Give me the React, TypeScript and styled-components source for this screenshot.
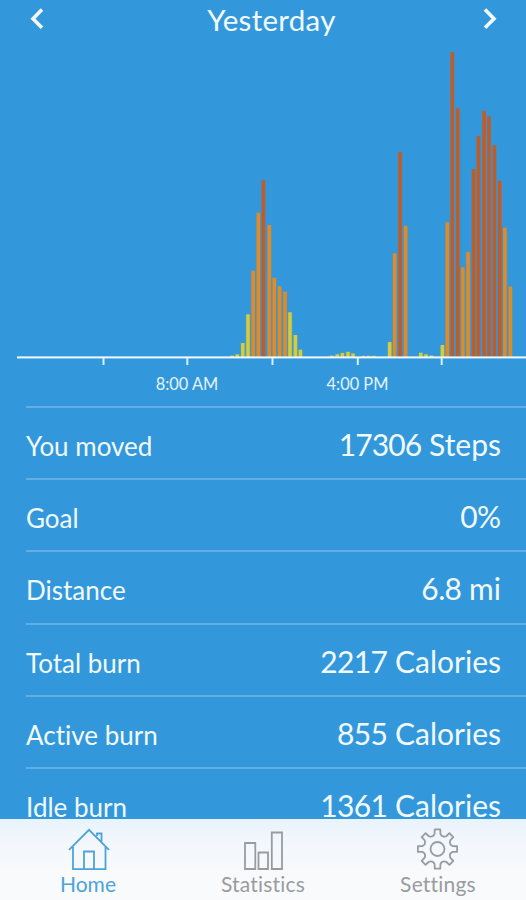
import React from "react";
import styled, { createGlobalStyle } from "styled-components";

const GlobalStyle = createGlobalStyle`
  * { box-sizing: border-box; }
  body { margin: 0; background: #3398db; overflow: hidden; }
`;

const Screen = styled.div`
  display: flex;
  flex-direction: column;
  width: 526px;
  height: 900px;
  overflow: hidden;
  background: #3398db;
  color: #f1faff;
  font-family: Lato, "Liberation Sans", sans-serif;
  font-variant-ligatures: none;
`;

const Header = styled.header`
  display: grid;
  grid-template-columns: 16px 1fr 16px;
  flex: none;
  align-items: center;
  height: 40px;
  padding: 0 28px 4px 29px;
`;

const Title = styled.h1`
  margin: 0;
  padding: 4px 0 0 16px;
  font-size: 29.5px;
  font-weight: 400;
  line-height: 32px;
  letter-spacing: 0.3px;
  text-align: center;
`;

const ArrowButton = styled.button`
  display: flex;
  width: 16px;
  height: 24px;
  padding: 0;
  border: 0;
  background: none;
  color: inherit;
`;

const ChartPanel = styled.section`
  flex: none;
  height: 366px;
`;

const Chart = styled.svg`
  display: block;
`;

const ChartLabel = styled.text`
  font-size: 16.4px;
  fill: #e4f3fc;
  text-anchor: middle;
`;

const StatList = styled.dl`
  flex: 1;
  min-height: 0;
  margin: 0;
  overflow: hidden;
`;

const StatRow = styled.div`
  display: flex;
  align-items: baseline;
  justify-content: space-between;
  height: 72.2px;
  margin-left: 26px;
  padding: 16px 25px 0 0;
  border-top: 2px solid #64aee3;
`;

const StatLabel = styled.dt`
  font-size: 26px;
  line-height: 40px;
`;

const StatValue = styled.dd`
  margin: 0;
  font-size: 30px;
  line-height: 40px;
`;

const Figure = styled.span<{ $long: boolean }>`
  letter-spacing: ${(p) => (p.$long ? "-0.85px" : "-0.6px")};
`;

const TabBar = styled.nav`
  display: grid;
  grid-template-columns: 176px 174px 176px;
  flex: none;
  height: 81px;
  background: linear-gradient(#e9f3fb, #f4f8fc 35%, #f9fafb 75%);
`;

const Tab = styled.button<{ $active?: boolean }>`
  display: flex;
  flex-direction: column;
  align-items: center;
  padding: 8px 0 0;
  border: 0;
  background: none;
  font: inherit;
  font-variant-ligatures: none;
  font-size: 21px;
  line-height: 24px;
  letter-spacing: ${(p) => (p.$active ? "0" : "0.2px")};
  color: ${(p) => (p.$active ? "#4da3d9" : "#999c9f")};
`;

const TabIcon = styled.svg`
  display: block;
  margin-bottom: 1px;
  fill: none;
  stroke: currentColor;
  stroke-width: 1.8;
`;

type Level = "low" | "mid" | "high";

const levelColor: Record<Level, string> = {
  low: "#d8cb38",
  mid: "#e38a24",
  high: "#c05c28",
};

const bars: [number, number, Level][] = [
  [232, 355.6, "low"], [237.3, 354.3, "low"], [242.8, 343, "low"], [248, 314.3, "low"],
  [253.2, 270.7, "mid"], [258.4, 212.7, "mid"], [263.4, 180.3, "high"], [269.3, 225, "mid"],
  [274.3, 277.7, "mid"], [279.6, 286.3, "mid"], [285, 291.7, "mid"], [290, 312.3, "low"],
  [295.4, 335, "low"], [300.4, 349.7, "low"],
  [331.7, 355.6, "low"], [337.3, 354.3, "low"], [342.4, 352.9, "low"], [348, 351.8, "low"],
  [353, 353.4, "low"], [363.4, 355.8, "low"], [368.6, 355.8, "low"], [373.8, 355.8, "low"],
  [389.7, 342, "low"], [394.7, 253.3, "mid"], [400.1, 151.8, "high"], [405.6, 225.8, "mid"],
  [420.8, 352.7, "low"], [426, 354.3, "low"], [431.5, 355.5, "low"], [442.4, 345, "low"],
  [447.3, 222.3, "mid"], [452.3, 52, "high"], [457.8, 108.2, "high"], [462.8, 267.5, "mid"],
  [468.1, 251.9, "mid"], [473.6, 169, "high"], [478.4, 135.9, "high"], [484.1, 110.8, "high"],
  [489, 116.3, "high"], [494.4, 145.3, "high"], [499.8, 180.8, "high"], [504.9, 227.7, "mid"],
  [510.4, 286.5, "mid"],
];

const ticks = [103.5, 187.3, 272.5, 357.8, 441.7];

const stats = [
  { label: "You moved", figure: "17306", unit: " Steps" },
  { label: "Goal", figure: "0", unit: "%" },
  { label: "Distance", figure: "6.8", unit: " mi" },
  { label: "Total burn", figure: "2217", unit: " Calories" },
  { label: "Active burn", figure: "855", unit: " Calories" },
  { label: "Idle burn", figure: "1361", unit: " Calories" },
];

function gearPath(cx: number, cy: number) {
  const at = (r: number, deg: number) => {
    const a = (deg * Math.PI) / 180;
    return `${(cx + r * Math.cos(a)).toFixed(2)} ${(cy + r * Math.sin(a)).toFixed(2)}`;
  };
  let d = "";
  for (let i = 0; i < 8; i++) {
    const a = i * 45 - 90;
    d += `${i ? "L" : "M"}${at(19.8, a - 8)} L${at(19.8, a + 8)} L${at(15.4, a + 11)} Q${at(12.2, a + 22.5)} ${at(15.4, a + 34)} `;
  }
  return d + "Z";
}

function ActivityChart() {
  return (
    <Chart width="526" height="366" viewBox="0 40 526 366">
      {bars.map(([x, top, level]) => (
        <g key={x} fill={levelColor[level]}>
          <rect x={x - 2.5} y={top} width="5" height={357 - top} opacity="0.15" />
          <rect x={x - 1.75} y={top} width="3.5" height={357 - top} />
        </g>
      ))}
      <rect x="17" y="356.4" width="509" height="2" fill="#f1faff" />
      {ticks.map((x) => (
        <rect key={x} x={x - 1} y="358" width="2" height="7" fill="#d9eefb" />
      ))}
      <ChartLabel x="187" y="390">8:00 AM</ChartLabel>
      <ChartLabel x="357.5" y="390">4:00 PM</ChartLabel>
    </Chart>
  );
}

export default function App() {
  return (
    <>
      <GlobalStyle />
      <Screen>
        <Header>
          <ArrowButton aria-label="Previous day">
            <svg width="16" height="24" viewBox="0 0 16 24" fill="none" stroke="currentColor" strokeWidth="3.6">
              <path d="M13 3.6 L4 12.7 L13 21.8" />
            </svg>
          </ArrowButton>
          <Title>Yesterday</Title>
          <ArrowButton aria-label="Next day">
            <svg width="16" height="24" viewBox="0 0 16 24" fill="none" stroke="currentColor" strokeWidth="3.6">
              <path d="M3 3.6 L12 12.7 L3 21.8" />
            </svg>
          </ArrowButton>
        </Header>
        <ChartPanel>
          <ActivityChart />
        </ChartPanel>
        <StatList>
          {stats.map((s) => (
            <StatRow key={s.label}>
              <StatLabel>{s.label}</StatLabel>
              <StatValue>
                <Figure $long={s.figure.length > 4}>{s.figure}</Figure>
                {s.unit}
              </StatValue>
            </StatRow>
          ))}
        </StatList>
        <TabBar>
          <Tab $active>
            <TabIcon width="44" height="44" viewBox="0 0 44 44">
              <path d="M3 22.8 L23 2.8 L43 22.8 M7 20 V42.2 H39.5 V20 M18 42 V24.5 H28 V42 M31 9 V6.5 H35.5 V14.5" />
            </TabIcon>
            Home
          </Tab>
          <Tab>
            <TabIcon width="44" height="44" viewBox="0 0 44 44">
              <path d="M4 16 H14.3 V42 H4 Z M17.5 25.5 H27 V42 H17.5 Z M30.8 5.5 H41 V42 H30.8 Z" />
            </TabIcon>
            Statistics
          </Tab>
          <Tab>
            <TabIcon width="44" height="44" viewBox="0 0 44 44">
              <path d={gearPath(21.5, 22)} strokeLinejoin="round" />
              <circle cx="21.5" cy="22" r="7" />
            </TabIcon>
            Settings
          </Tab>
        </TabBar>
      </Screen>
    </>
  );
}
